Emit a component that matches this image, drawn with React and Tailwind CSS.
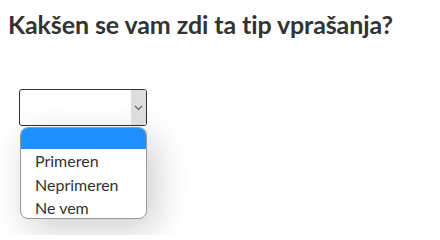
export default function App() {
  const options = ["Primeren", "Neprimeren", "Ne vem"];
  return (
    <div className="w-[440px] h-[235px] bg-white font-['Source_Sans_Pro','Lato','Liberation_Sans',sans-serif] text-[#333] px-2 pt-[9px]">
      <h2 className="text-[25px] font-bold leading-[30px] tracking-[-0.1px]">Kakšen se vam zdi ta tip vprašanja?</h2>
      <div className="mt-[50px] ml-[11px] w-[128px]">
        <div className="h-[37px] flex border border-[#333] rounded-[3px] overflow-hidden bg-white">
          <div className="flex-1"></div>
          <div className="w-[15px] bg-[#ddd] flex items-center justify-center">
            <svg width="9" height="6" viewBox="0 0 9 6" fill="none" stroke="#666" strokeWidth="1.2">
              <path d="M1 1l3.5 3.5L8 1" />
            </svg>
          </div>
        </div>
        <div className="mt-px ml-px h-[92px] border border-[#999] rounded-[8px] overflow-hidden bg-white shadow-[8px_10px_36px_rgba(0,0,0,0.2)]">
          <div className="h-[21px] bg-[#1e90ff]"></div>
          <div className="pl-[14px] text-[16px] leading-[23.5px]">
            {options.map((o) => (
              <div key={o}>{o}</div>
            ))}
          </div>
        </div>
      </div>
    </div>
  );
}
